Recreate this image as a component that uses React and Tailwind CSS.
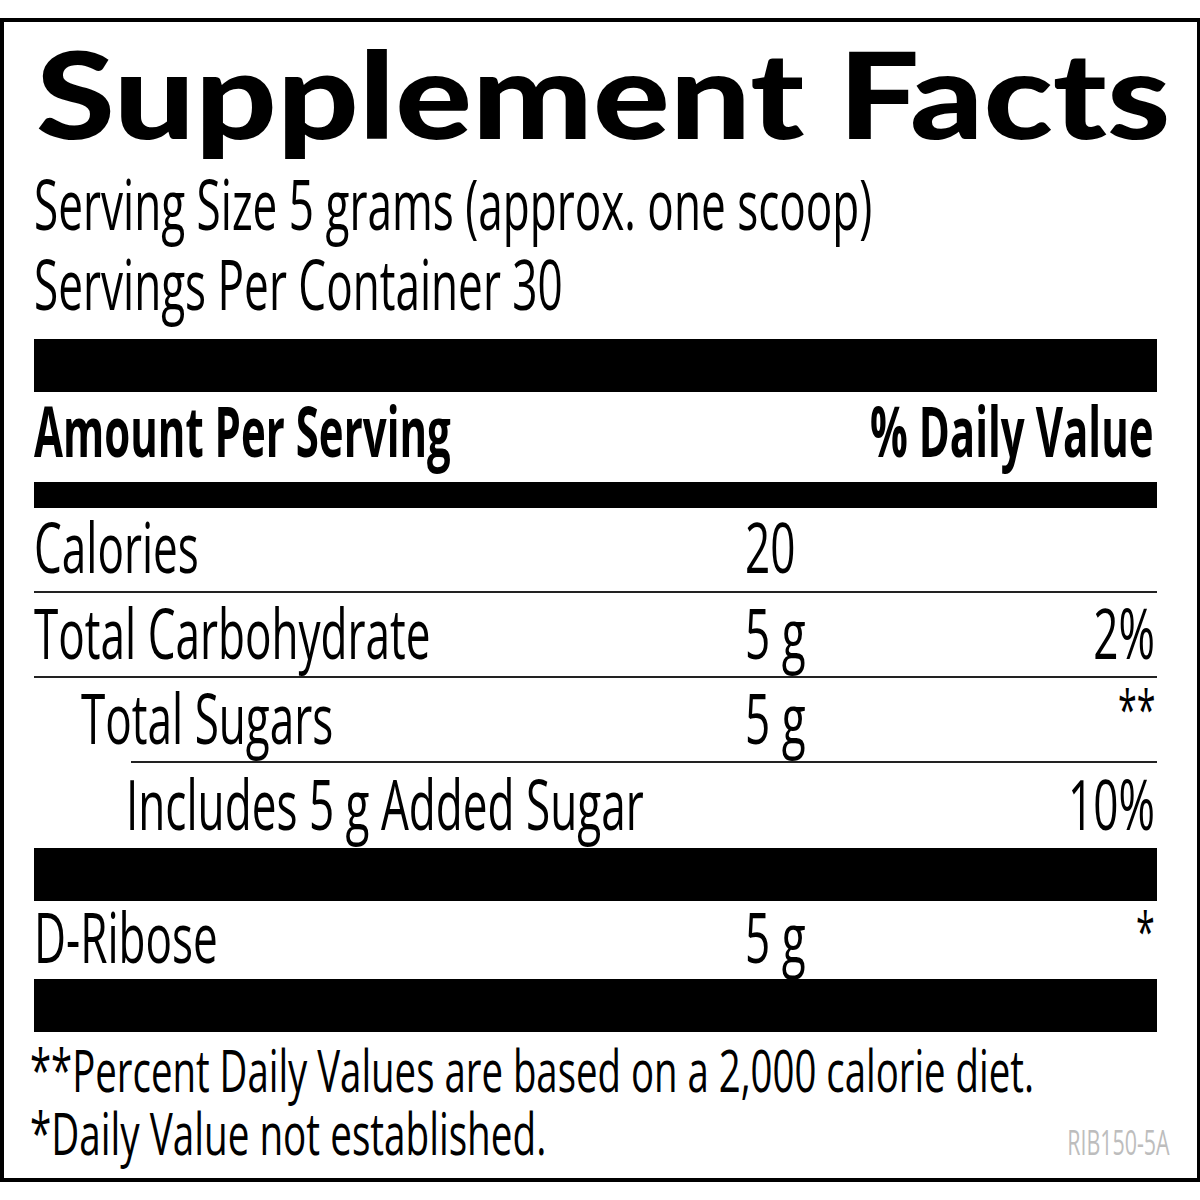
// Supplement Facts label

function Txt({ children, right, sx }) {
  const base = right ? "origin-right" : "origin-left"
  return <span className={`${base} inline-block whitespace-nowrap ${sx || "scale-x-[0.63]"}`}>{children}</span>
}

function Bar({ h }) {
  return <div className={`${h} bg-black`} />
}

function Rule({ indent }) {
  return <div className={`h-[2px] bg-[#222] ${indent || ""}`} />
}

function Row({ label, amount, dv, box, pad, dvSize }) {
  return (
    <div className={`grid grid-cols-[711px_1fr_auto] text-[70px] leading-none ${box}`}>
      <div className={pad || ""}>
        <Txt>{label}</Txt>
      </div>
      <div>{amount && <Txt>{amount}</Txt>}</div>
      <div className={`text-right pr-[2px] ${dvSize || ""}`}>{dv && <Txt right>{dv}</Txt>}</div>
    </div>
  )
}

export default function App() {
  return (
    <div className="min-h-[1200px] overflow-hidden bg-white pt-[18px] font-['Open_Sans',sans-serif] text-black">
      <div className="h-[1164px] w-[1200px] overflow-hidden border-4 border-r-[3px] border-black pl-[30px] pr-[40px]">
        {/* title */}
        <div className="h-[131px] whitespace-nowrap pl-[2px] pt-[10px] font-['Lato',sans-serif] text-[121px] font-black leading-none">
          <Txt sx="scale-x-[1.185]">Supplement Facts</Txt>
        </div>

        {/* serving info */}
        <div className="pt-[15px] text-[70px] leading-none">
          <Txt>Serving Size 5 grams (approx. one scoop)</Txt>
        </div>
        <div className="pt-[10px] text-[70px] leading-none">
          <Txt>Servings Per Container 30</Txt>
        </div>

        <div className="mt-[21px]">
          <Bar h="h-[53px]" />
        </div>

        <div className="grid h-[90px] grid-cols-[561px_562px] pt-[3px] text-[70px] font-bold leading-none">
          <div>
            <Txt sx="scale-x-[0.6]">Amount Per Serving</Txt>
          </div>
          <div className="pr-[3px] text-right">
            <Txt right sx="scale-x-[0.6]">% Daily Value</Txt>
          </div>
        </div>

        <Bar h="h-[26px]" />

        <Row label="Calories" amount="20" box="h-[83px] pt-[3px]" />
        <Rule />
        <Row label="Total Carbohydrate" amount="5 g" dv="2%" box="h-[83px] pt-[4px]" />
        <Rule />
        <Row label="Total Sugars" amount="5 g" dv="**" box="h-[83px] pt-[4px]" pad="pl-[47px]" dvSize="text-[54px]" />
        <Rule indent="ml-[97px]" />
        <Row label="Includes 5 g Added Sugar" dv="10%" box="h-[85px] pt-[5px]" pad="pl-[92px]" />

        <Bar h="h-[53px]" />

        <Row label="D-Ribose" amount="5 g" dv="*" box="h-[78px] pt-0" dvSize="text-[54px] pt-[3px]" />

        <Bar h="h-[53px]" />

        {/* footnotes */}
        <div className="-ml-[4px] mt-[6px] text-[59px] leading-[63px]">
          <div>
            <Txt sx="scale-x-[0.65]">**Percent Daily Values are based on a 2,000 calorie diet.</Txt>
          </div>
          <div className="flex items-baseline justify-between">
            <Txt sx="scale-x-[0.655]">*Daily Value not established.</Txt>
            <span className="-mr-[13px] text-[34px] text-[#bdbdbd]">
              <Txt right>RIB150-5A</Txt>
            </span>
          </div>
        </div>
      </div>
    </div>
  )
}
